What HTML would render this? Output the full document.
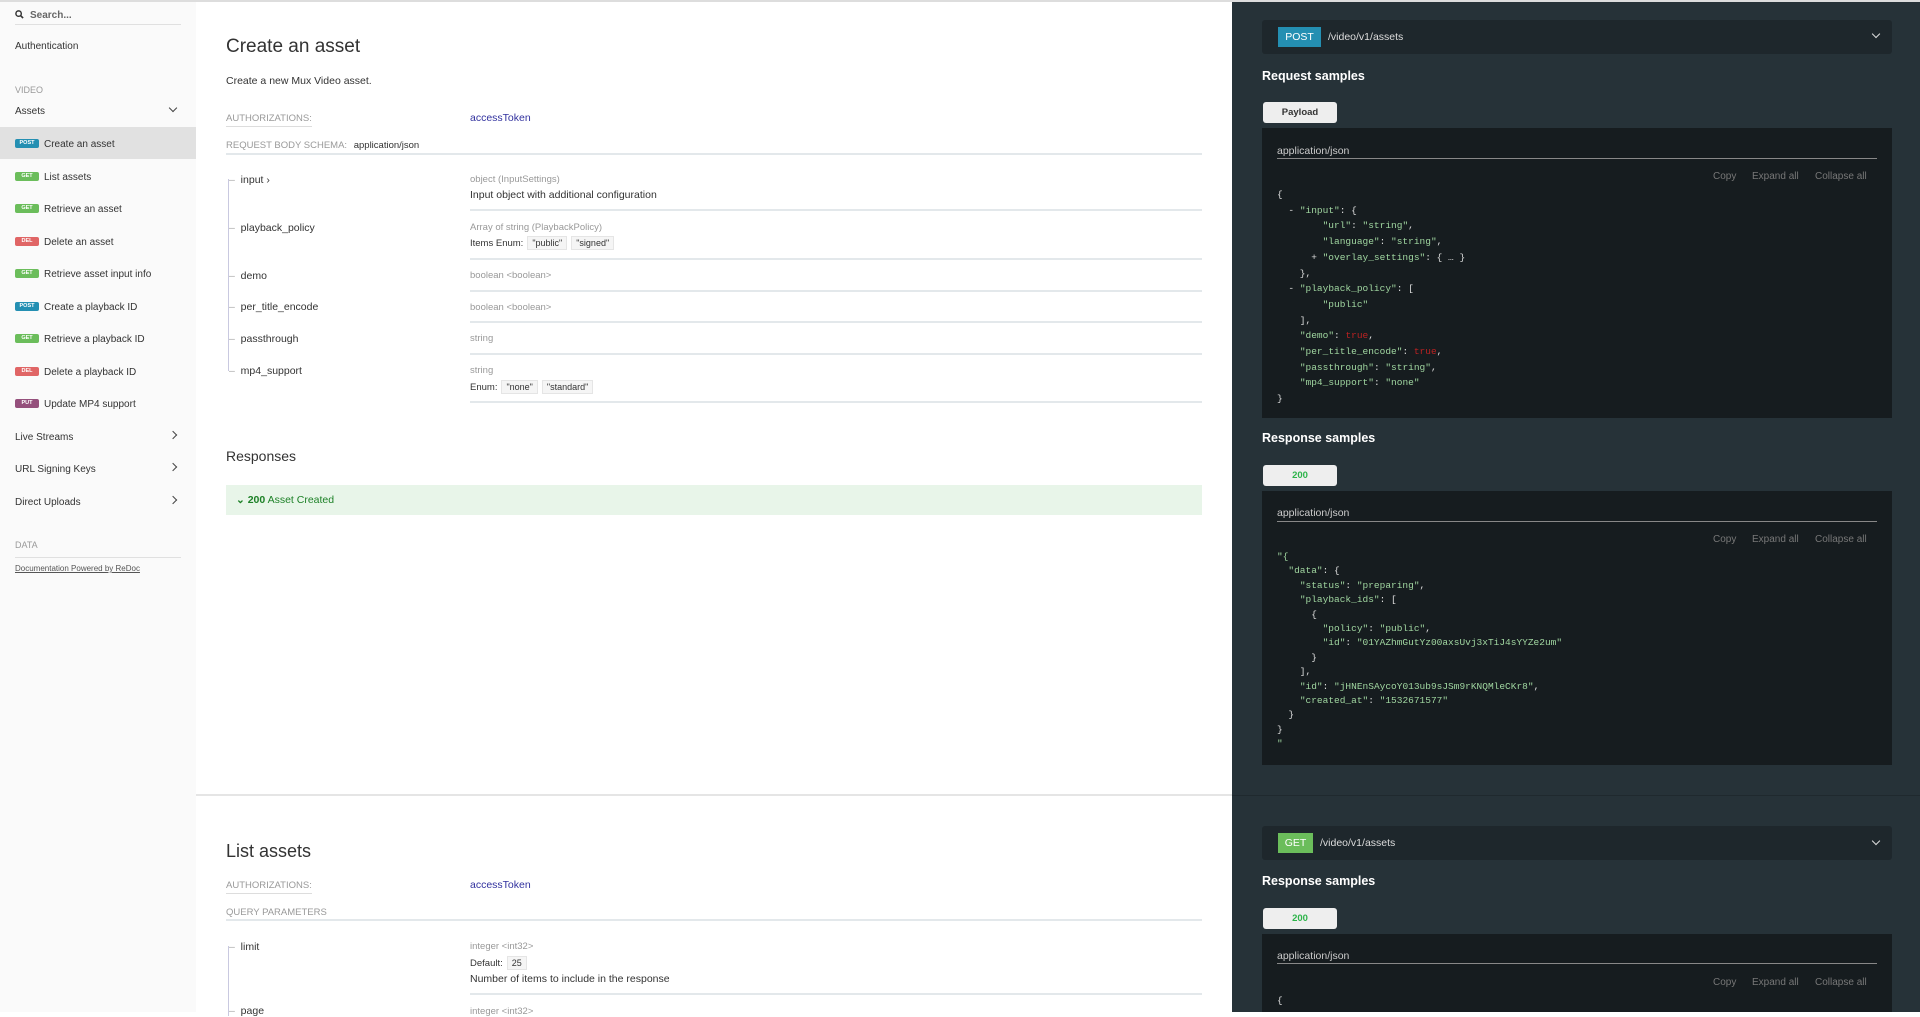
<!DOCTYPE html>
<html><head><meta charset="utf-8"><style>
*{margin:0;padding:0;box-sizing:border-box}
body{width:1920px;height:1012px;overflow:hidden;position:relative;font-family:"Liberation Sans",sans-serif;background:#fff;color:#333}
.a{position:absolute;white-space:nowrap}
#side{position:absolute;left:0;top:0;width:196px;height:1012px;background:#fafafa}
.si{position:absolute;left:15px;font-size:10px;color:#333;margin-top:2px}
.bd{position:absolute;left:15px;width:24px;height:9px;border-radius:2px;color:#fff;font-size:5.5px;font-weight:bold;text-align:center;line-height:9px;margin-top:1px}
.post{background:#248fb2}.get{background:#6bbd5b}.del{background:#e06565}.put{background:#95507c}
.chev{position:absolute;left:170px;width:6px;height:6px;border-right:1.5px solid #444;border-bottom:1.5px solid #444}
#mid{position:absolute;left:196px;top:0;width:1036px;height:1012px;background:#fff}
#right{position:absolute;left:1232px;top:0;width:688px;height:1012px;background:#263238}
.lbl{font-size:9.5px;color:#999;text-transform:uppercase}
.fn{font-size:10.5px;color:#333;margin-top:2px}
.ty{font-size:9.5px;color:#999}
.hl{position:absolute;height:2px;background:#e3e8eb}
.en{display:inline-block;border:1px solid #e5e5e5;background:#f5f5f5;padding:0 4px;margin-left:4px;font-size:9px;line-height:12px}
.bar{position:absolute;left:1262px;width:630px;height:34px;background:#1e272c;border-radius:3px}
.h5{font-size:12.5px;font-weight:bold;color:#fff}
.tab{position:absolute;left:1263px;width:74px;height:21px;background:#eee;border-radius:3px;font-size:9.5px;font-weight:bold;text-align:center;line-height:21px;color:#333}
.box{position:absolute;left:1262px;width:630px;background:#161c1f}
.code{font-family:"Liberation Mono",monospace;font-size:9.5px;line-height:15.7px;color:#ddd;white-space:pre}
.s{color:#a0d6a0}.r{color:#b22}
.tools{font-size:10px;color:#777}
.tk{color:#aaa}
</style></head><body>
<div style="position:absolute;left:0;top:0;width:1920px;height:2px;background:#ddd;z-index:5"></div>
<div id="side">
<svg class="a" style="left:15px;top:10px" width="9" height="9" viewBox="0 0 10 10"><circle cx="4" cy="4" r="3" stroke="#333" stroke-width="1.6" fill="none"/><path d="M6 6 L9 9" stroke="#333" stroke-width="1.8"/></svg>
<div class="si" style="left:30px;top:8px;font-weight:bold;color:#666">Search...</div>
<div style="position:absolute;left:15px;top:24px;width:166px;height:1px;background:#e0e0e0"></div>
<div class="si" style="top:39px">Authentication</div>
<div class="si" style="top:83px;color:#999;font-size:9px">VIDEO</div>
<div class="si" style="top:104px">Assets</div>
<div class="chev" style="top:105px;transform:rotate(45deg)"></div>
<div style="position:absolute;left:0;top:127px;width:196px;height:32px;background:#e1e1e1"></div>
<div class="bd post" style="top:138px">POST</div><div class="si" style="left:44px;top:137px">Create an asset</div>
<div class="bd get" style="top:171px">GET</div><div class="si" style="left:44px;top:170px">List assets</div>
<div class="bd get" style="top:203px">GET</div><div class="si" style="left:44px;top:202px">Retrieve an asset</div>
<div class="bd del" style="top:236px">DEL</div><div class="si" style="left:44px;top:235px">Delete an asset</div>
<div class="bd get" style="top:268px">GET</div><div class="si" style="left:44px;top:267px">Retrieve asset input info</div>
<div class="bd post" style="top:301px">POST</div><div class="si" style="left:44px;top:300px">Create a playback ID</div>
<div class="bd get" style="top:333px">GET</div><div class="si" style="left:44px;top:332px">Retrieve a playback ID</div>
<div class="bd del" style="top:366px">DEL</div><div class="si" style="left:44px;top:365px">Delete a playback ID</div>
<div class="bd put" style="top:398px">PUT</div><div class="si" style="left:44px;top:397px">Update MP4 support</div>
<div class="si" style="top:430px">Live Streams</div><div class="chev" style="top:432px;transform:rotate(-45deg)"></div>
<div class="si" style="top:462px">URL Signing Keys</div><div class="chev" style="top:464px;transform:rotate(-45deg)"></div>
<div class="si" style="top:495px">Direct Uploads</div><div class="chev" style="top:497px;transform:rotate(-45deg)"></div>
<div class="si" style="top:538px;color:#999;font-size:9px">DATA</div>
<div style="position:absolute;left:15px;top:557px;width:166px;height:1px;background:#e0e0e0"></div>
<div class="si" style="top:562px;font-size:8px;color:#555;text-decoration:underline">Documentation Powered by ReDoc</div>
</div>

<div id="mid"></div>
<div class="a" style="left:226px;top:36px;font-size:19px;color:#333">Create an asset</div>
<div class="a" style="left:226px;top:75px;font-size:10.5px">Create a new Mux Video asset.</div>
<div class="a lbl" style="left:226px;top:113px;border-bottom:1px solid #ddd;padding-bottom:2px">Authorizations:</div>
<div class="a" style="left:470px;top:112px;font-size:10.5px;color:#32329f">accessToken</div>
<div class="a lbl" style="left:226px;top:140px">Request Body schema: <span style="color:#333;text-transform:none;margin-left:4px">application/json</span></div>
<div class="hl" style="left:226px;top:153px;width:976px"></div>
<div style="position:absolute;left:228px;top:179px;width:1px;height:192px;background:#c9c9e0"></div>
<div class="a fn" style="left:229px;top:172px"><span class="tk">–</span>&nbsp;&nbsp;input ›</div>
<div class="a fn" style="left:229px;top:220px"><span class="tk">–</span>&nbsp;&nbsp;playback_policy</div>
<div class="a fn" style="left:229px;top:268px"><span class="tk">–</span>&nbsp;&nbsp;demo</div>
<div class="a fn" style="left:229px;top:299px"><span class="tk">–</span>&nbsp;&nbsp;per_title_encode</div>
<div class="a fn" style="left:229px;top:331px"><span class="tk">–</span>&nbsp;&nbsp;passthrough</div>
<div class="a fn" style="left:229px;top:363px"><span class="tk">–</span>&nbsp;&nbsp;mp4_support</div>
<div class="a ty" style="left:470px;top:174px">object (InputSettings)</div>
<div class="a" style="left:470px;top:189px;font-size:10.5px">Input object with additional configuration</div>
<div class="hl" style="left:470px;top:209px;width:732px"></div>
<div class="a ty" style="left:470px;top:222px">Array of string (PlaybackPolicy)</div>
<div class="a" style="left:470px;top:236px;font-size:9.5px">Items Enum:<span class="en">"public"</span><span class="en">"signed"</span></div>
<div class="hl" style="left:470px;top:258px;width:732px"></div>
<div class="a ty" style="left:470px;top:270px">boolean &lt;boolean&gt;</div>
<div class="hl" style="left:470px;top:290px;width:732px"></div>
<div class="a ty" style="left:470px;top:302px">boolean &lt;boolean&gt;</div>
<div class="hl" style="left:470px;top:321px;width:732px"></div>
<div class="a ty" style="left:470px;top:333px">string</div>
<div class="hl" style="left:470px;top:353px;width:732px"></div>
<div class="a ty" style="left:470px;top:365px">string</div>
<div class="a" style="left:470px;top:380px;font-size:9.5px">Enum:<span class="en">"none"</span><span class="en">"standard"</span></div>
<div class="hl" style="left:470px;top:401px;width:732px"></div>
<div class="a" style="left:226px;top:448px;font-size:14px">Responses</div>
<div style="position:absolute;left:226px;top:485px;width:976px;height:30px;background:#e8f5e9"></div>
<div class="a" style="left:236px;top:494px;font-size:10.5px;color:#1d8127"><b>⌄ 200</b> Asset Created</div>
<div style="position:absolute;left:196px;top:794px;width:1036px;height:2px;background:#e5e5e5"></div>
<div class="a" style="left:226px;top:841px;font-size:18px">List assets</div>
<div class="a lbl" style="left:226px;top:880px;border-bottom:1px solid #ddd;padding-bottom:2px">Authorizations:</div>
<div class="a" style="left:470px;top:879px;font-size:10.5px;color:#32329f">accessToken</div>
<div class="a lbl" style="left:226px;top:907px">Query parameters</div>
<div class="hl" style="left:226px;top:919px;width:976px"></div>
<div style="position:absolute;left:228px;top:946px;width:1px;height:70px;background:#c9c9e0"></div>
<div class="a fn" style="left:229px;top:939px"><span class="tk">–</span>&nbsp;&nbsp;limit</div>
<div class="a fn" style="left:229px;top:1003px"><span class="tk">–</span>&nbsp;&nbsp;page</div>
<div class="a ty" style="left:470px;top:941px">integer &lt;int32&gt;</div>
<div class="a" style="left:470px;top:956px;font-size:9.5px">Default:<span class="en">25</span></div>
<div class="a" style="left:470px;top:973px;font-size:10.5px">Number of items to include in the response</div>
<div class="hl" style="left:470px;top:993px;width:732px"></div>
<div class="a ty" style="left:470px;top:1006px">integer &lt;int32&gt;</div>

<div id="right"></div>
<div class="bar" style="top:20px"></div>
<div class="a" style="left:1278px;top:27px;width:43px;height:20px;background:#248fb2;color:#fff;font-size:10.5px;text-align:center;line-height:20px">POST</div>
<div class="a" style="left:1328px;top:31px;font-size:10.5px;color:#ddd">/video/v1/assets</div>
<div class="a" style="left:1873px;top:31px;width:6px;height:6px;border-right:1.5px solid #ddd;border-bottom:1.5px solid #ddd;transform:rotate(45deg)"></div>
<div class="a h5" style="left:1262px;top:69px">Request samples</div>
<div class="tab" style="top:102px">Payload</div>
<div class="box" style="top:128px;height:290px"></div>
<div class="a" style="left:1277px;top:145px;font-size:10.5px;color:#ccc">application/json</div>
<div style="position:absolute;left:1277px;top:158px;width:600px;height:1px;background:#888"></div>
<div class="a tools" style="left:1713px;top:171px">Copy</div>
<div class="a tools" style="left:1752px;top:171px">Expand all</div>
<div class="a tools" style="left:1815px;top:171px">Collapse all</div>
<div class="a code" style="left:1277px;top:187px">{
  - <span class="s">"input"</span>: {
        <span class="s">"url"</span>: <span class="s">"string"</span>,
        <span class="s">"language"</span>: <span class="s">"string"</span>,
      + <span class="s">"overlay_settings"</span>: { … }
    },
  - <span class="s">"playback_policy"</span>: [
        <span class="s">"public"</span>
    ],
    <span class="s">"demo"</span>: <span class="r">true</span>,
    <span class="s">"per_title_encode"</span>: <span class="r">true</span>,
    <span class="s">"passthrough"</span>: <span class="s">"string"</span>,
    <span class="s">"mp4_support"</span>: <span class="s">"none"</span>
}</div>
<div class="a h5" style="left:1262px;top:431px">Response samples</div>
<div class="tab" style="top:465px;color:#2db44a">200</div>
<div class="box" style="top:491px;height:274px"></div>
<div class="a" style="left:1277px;top:507px;font-size:10.5px;color:#ccc">application/json</div>
<div style="position:absolute;left:1277px;top:521px;width:600px;height:1px;background:#888"></div>
<div class="a tools" style="left:1713px;top:534px">Copy</div>
<div class="a tools" style="left:1752px;top:534px">Expand all</div>
<div class="a tools" style="left:1815px;top:534px">Collapse all</div>
<div class="a code" style="left:1277px;top:550px;line-height:14.4px"><span class="s">"{</span>
  <span class="s">"data"</span>: {
    <span class="s">"status"</span>: <span class="s">"preparing"</span>,
    <span class="s">"playback_ids"</span>: [
      {
        <span class="s">"policy"</span>: <span class="s">"public"</span>,
        <span class="s">"id"</span>: <span class="s">"01YAZhmGutYz00axsUvj3xTiJ4sYYZe2um"</span>
      }
    ],
    <span class="s">"id"</span>: <span class="s">"jHNEnSAycoY013ub9sJSm9rKNQMleCKr8"</span>,
    <span class="s">"created_at"</span>: <span class="s">"1532671577"</span>
  }
}
<span class="s">"</span></div>
<div style="position:absolute;left:1232px;top:795px;width:688px;height:1px;background:#1f292e"></div>
<div class="bar" style="top:826px"></div>
<div class="a" style="left:1278px;top:833px;width:35px;height:20px;background:#6bbd5b;color:#fff;font-size:10.5px;text-align:center;line-height:20px">GET</div>
<div class="a" style="left:1320px;top:837px;font-size:10.5px;color:#ddd">/video/v1/assets</div>
<div class="a" style="left:1873px;top:838px;width:6px;height:6px;border-right:1.5px solid #ddd;border-bottom:1.5px solid #ddd;transform:rotate(45deg)"></div>
<div class="a h5" style="left:1262px;top:874px">Response samples</div>
<div class="tab" style="top:908px;color:#2db44a">200</div>
<div class="box" style="top:934px;height:78px"></div>
<div class="a" style="left:1277px;top:950px;font-size:10.5px;color:#ccc">application/json</div>
<div style="position:absolute;left:1277px;top:963px;width:600px;height:1px;background:#888"></div>
<div class="a tools" style="left:1713px;top:977px">Copy</div>
<div class="a tools" style="left:1752px;top:977px">Expand all</div>
<div class="a tools" style="left:1815px;top:977px">Collapse all</div>
<div class="a code" style="left:1277px;top:993px">{</div>
</body></html>
